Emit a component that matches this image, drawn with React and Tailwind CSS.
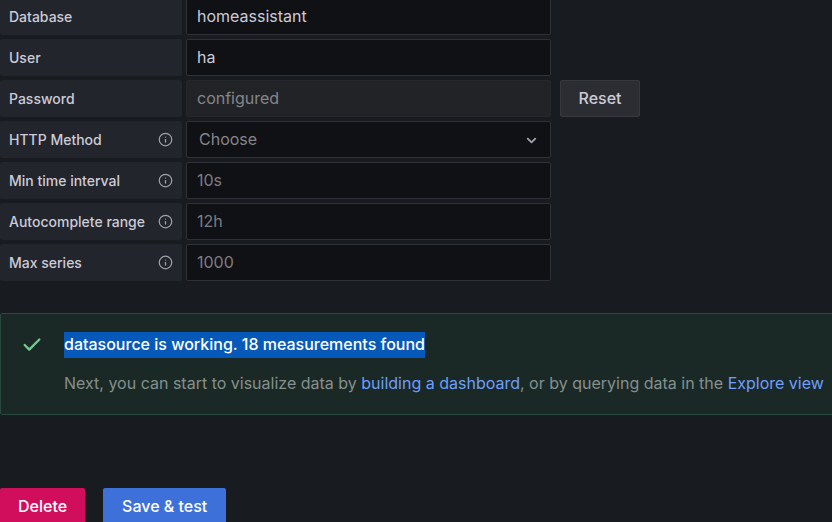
import { Check, ChevronDown, Info } from 'lucide-react';

const fields = [
    { id: 'database', label: 'Database', value: 'homeassistant' },
    { id: 'user', label: 'User', value: 'ha' },
    { id: 'password', label: 'Password', value: 'configured', configured: true },
    { id: 'httpMethod', label: 'HTTP Method', info: true, options: ['Choose', 'GET', 'POST'] },
    { id: 'timeInterval', label: 'Min time interval', info: true, placeholder: '10s' },
    { id: 'autocomplete', label: 'Autocomplete range', info: true, placeholder: '12h' },
    { id: 'maxSeries', label: 'Max series', info: true, placeholder: '1000' },
];

const inputClass = 'w-full h-full px-2.5 pb-0.5 rounded-xs border border-[#303136] bg-[#101115] text-[#cccbd8] placeholder:text-[#7c7d81] focus:outline-none focus:border-[#6e9fff]';

const FieldControl = ({ field }) => {
    if (field.options) {
        return (
            <div className="relative h-full">
                <select id={field.id} defaultValue="Choose" className="w-full h-full pl-3 pr-8 pb-0.5 appearance-none rounded-xs border border-[#303136] bg-[#101115] text-[#85868b]">
                    {field.options.map(o => <option key={o}>{o}</option>)}
                </select>
                <ChevronDown size={15} strokeWidth={3} className="absolute right-3 top-3 text-[#a0a1a9] pointer-events-none" />
            </div>
        );
    }
    if (field.configured) {
        return (
            <input id={field.id} type="text" disabled value={field.value}
                className="w-full h-full px-2.5 pb-0.5 rounded-xs border border-[#26272b] bg-[#222327] text-[#85868b]" />
        );
    }
    return <input id={field.id} type="text" defaultValue={field.value} placeholder={field.placeholder} className={inputClass} />;
};

const FieldRow = ({ field }) => (
    <div className="flex h-[37px]">
        <label htmlFor={field.id} className="flex items-center justify-between w-[182px] mr-1 px-[9px] rounded-xs bg-[#22252b] text-sm font-medium text-[#cccbd8]">
            {field.label}
            {field.info && <Info size={15} className="text-[#a0a1a9]" />}
        </label>
        <div className="w-[365px]">
            <FieldControl field={field} />
        </div>
        {field.configured && (
            <button type="button" className="ml-[9px] w-20 pb-0.5 rounded-xs border border-[#37383d] bg-[#2c2d32] font-medium text-[#cccbd8]">Reset</button>
        )}
    </div>
);

export default function App() {
    return (
        <div className="min-h-screen overflow-hidden bg-[#181b1f] font-['Inter',sans-serif] text-base">
            <form onSubmit={e => e.preventDefault()}>
                <div className="-mt-0.5 flex flex-col gap-1">
                    {fields.map(f => <FieldRow key={f.id} field={f} />)}
                </div>

                {/* the alert runs on past the right edge of the window */}
                <div role="status" className="mt-8 -mr-4 flex gap-[21px] py-[18px] pl-5 rounded-xs border border-[#27483a] bg-[#1a2925] leading-[26px] whitespace-nowrap">
                    <Check size={22} strokeWidth={2.5} className="shrink-0 mt-0.5 text-[#6ccf8e]" />
                    <div className="flex flex-col items-start gap-3">
                        <p className="h-[26px] bg-[#0759b9] leading-6 font-medium text-white">datasource is working. 18 measurements found</p>
                        <p className="text-[#85908e]">
                            Next, you can start to visualize data by <a href="#dashboard" className="text-[#6e9fff]">building a dashboard</a>, or by querying data in the <a href="#explore" className="text-[#6e9fff]">Explore view</a>
                        </p>
                    </div>
                </div>

                <div className="mt-[73px] flex gap-[18px] font-medium text-white">
                    <button type="button" className="h-[37px] px-[18px] pb-0.5 rounded-xs bg-[#d10e5c]">Delete</button>
                    <button type="submit" className="h-[37px] px-[19px] pb-0.5 rounded-xs bg-[#3d71d9]">Save &amp; test</button>
                </div>
            </form>
        </div>
    );
}
